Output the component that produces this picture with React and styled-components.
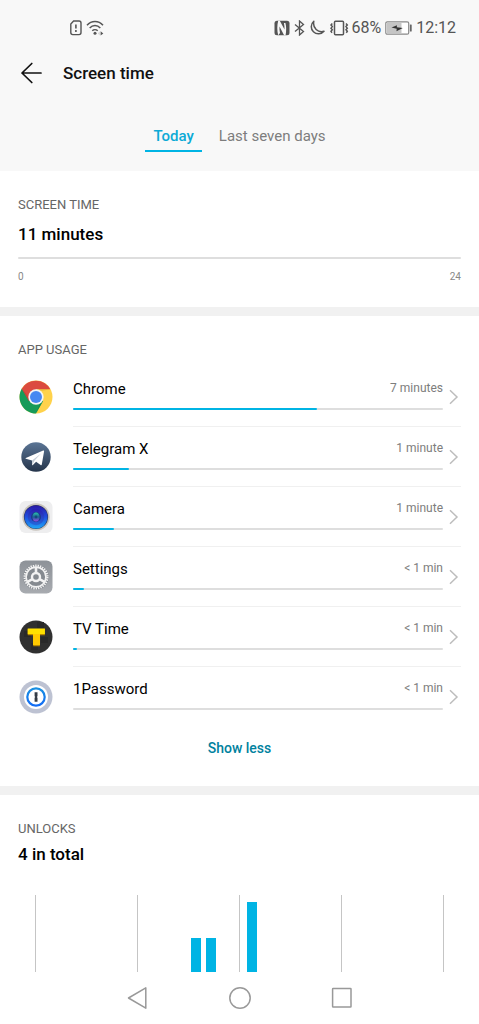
import React, { useState } from "react";
import styled, { createGlobalStyle } from "styled-components";

const blue = "#00b4e4";

const GlobalStyle = createGlobalStyle`
  * { box-sizing: border-box; }
  body {
    margin: 0;
    background: #fff;
    color: #000;
    font-family: Roboto, "Noto Sans", sans-serif;
  }
  svg { display: block; flex: none; }
  button { font: inherit; color: inherit; background: none; border: 0; padding: 0; cursor: pointer; }
  a { color: inherit; text-decoration: none; }
`;

const Screen = styled.div`
  display: flex;
  flex-direction: column;
  min-height: 100vh;
`;

const Header = styled.header`
  background: #f8f8f8;
  padding-bottom: 19px;
`;

const StatusBar = styled.div`
  display: flex;
  justify-content: space-between;
  align-items: center;
  height: 56px;
  padding: 0 23px 0 69px;
  font-size: 16px;
  line-height: 20px;
  color: #555;
`;

const StatusGroup = styled.div`
  display: flex;
  align-items: center;
  gap: ${(p) => p.$gap}px;
`;

const TitleBar = styled.div`
  display: flex;
  align-items: center;
  gap: 20px;
  height: 34px;
  padding: 0 20px;
`;

const Title = styled.h1`
  margin: 0;
  font-size: 17px;
  font-weight: 500;
  line-height: 24px;
  color: #111;
`;

const Tabs = styled.nav`
  display: flex;
  justify-content: center;
  gap: 9px;
  padding-top: 36px;
`;

const Tab = styled.button`
  && {
    padding: 0 8px 4px;
    border-bottom: 2px solid ${(p) => (p.$active ? blue : "transparent")};
    color: ${(p) => (p.$active ? "#0caad6" : "#7d7d7d")};
    font-size: 15px;
    font-weight: ${(p) => (p.$active ? 500 : 400)};
    line-height: 20px;
  }
`;

const Section = styled.section`
  padding: ${(p) => p.$pad};
  & + & { border-top: 9px solid #f1f1f1; }
`;

const SectionHeading = styled.div`
  padding: 0 18px;
`;

const Label = styled.h2`
  margin: 0;
  font-size: 13px;
  font-weight: 400;
  line-height: 16px;
  color: #666;
`;

const Total = styled.p`
  margin: ${(p) => p.$gap}px 0 0;
  font-size: 17px;
  font-weight: 500;
  line-height: 24px;
`;

const Track = styled.div`
  height: 2px;
  border-radius: 1px;
  background: #dedede;
`;

const DayTrack = styled(Track)`
  margin-top: 11px;
`;

const Fill = styled.div`
  height: 2px;
  border-radius: 1px;
  background: ${blue};
`;

const Scale = styled.div`
  display: flex;
  justify-content: space-between;
  margin-top: 12px;
  font-size: 10px;
  line-height: 12px;
  color: #888;
`;

const AppList = styled.ul`
  list-style: none;
  margin: 9px 0 0;
  padding: 0;
`;

const AppRow = styled.a`
  display: flex;
  height: 60px;
`;

const IconCell = styled.div`
  display: flex;
  align-items: center;
  justify-content: center;
  width: 36px;
  margin-right: 19px;
`;

const RowBody = styled.div`
  display: flex;
  flex: 1;
  align-items: center;
  border-bottom: 1px solid ${(p) => (p.$last ? "transparent" : "#f0f0f0")};
`;

const Usage = styled.div`
  flex: 1;
  padding-bottom: 5px;
`;

const UsageText = styled.div`
  display: flex;
  justify-content: space-between;
  margin-bottom: 9px;
  line-height: 20px;
`;

const AppName = styled.span`
  font-size: 15px;
`;

const Duration = styled.span`
  font-size: 12px;
  line-height: 18px;
  color: #7d7d7d;
`;

const ChevronCell = styled.div`
  padding: 0 2px 0 6px;
`;

const ShowLess = styled.button`
  && {
    display: block;
    margin: 11px auto 0;
    color: #00819e;
    font-size: 14px;
    font-weight: 500;
    line-height: 20px;
  }
`;

const Chart = styled.svg`
  width: 100%;
  height: auto;
  margin-top: 29px;
`;

const NavBar = styled.nav`
  display: flex;
  justify-content: center;
  height: 52px;
`;

const NavButton = styled.button`
  display: flex;
  align-items: center;
  justify-content: center;
  width: 102px;
`;

const SimIcon = () => (
  <svg width="14" height="16" viewBox="0 0 14 16" fill="none" stroke="#555" strokeWidth="1.4">
    <path d="M4.6 1H10a2 2 0 0 1 2 2v9.6a2 2 0 0 1-2 2H3.800a2 2 0 0 1-2-2V4z" />
    <path d="M6.900 4.600v4M6.900 10.100v1.800" strokeWidth="1.600" />
  </svg>
);

const WifiIcon = () => (
  <svg width="18" height="16" viewBox="0 0 18 16" fill="none" stroke="#555" strokeWidth="1.500">
    <path d="M1 5.200C5.500.3 12.500.3 17 5.200M3.700 8c3-3.200 7.600-3.200 10.600 0M6.300 10.800c1.500-1.500 3.900-1.500 5.400 0" />
    <circle cx="9" cy="13.300" r="1.500" fill="#555" stroke="none" />
    <path d="M14.600 11.300l2.700 2.200-2.700 2.100z" fill="#555" stroke="none" />
    <path d="M13.600 11.300l-1.500 2.200 1.500 1.900z" fill="#ccc" stroke="none" />
  </svg>
);

const NfcIcon = () => (
  <svg width="16" height="16" viewBox="0 0 16 16">
    <rect x="0.500" y="0.700" width="15" height="14.600" rx="2.500" fill="#555" />
    <path d="M4.200 15.300C3 11 3 5 4.200.7h1.600l4.700 8.800c.1-2.200-.1-4.300-.6-6.500h1.500c1 3.500 1 8 .2 12.300h-1.500L5.500 6.500c-.2 2.200 0 4.300.5 6.500z" fill="#f8f8f8" />
  </svg>
);

const BluetoothIcon = () => (
  <svg width="11" height="16" viewBox="0 0 11 16" fill="none" stroke="#555" strokeWidth="1.300">
    <path d="M1 4.500l8.500 7-4 3.500V1l4 3.500-8.500 7" />
  </svg>
);

const MoonIcon = () => (
  <svg width="16" height="16" viewBox="0 0 16 16" fill="none" stroke="#555" strokeWidth="1.500" strokeLinejoin="round">
    <path d="M4.800 1.200A7.200 7.200 0 1 0 15 11.300C9 12.900 3.400 8.200 4.800 1.200z" />
  </svg>
);

const VibrateIcon = () => (
  <svg width="20" height="16" viewBox="0 0 20 16" fill="none" stroke="#555">
    <rect x="5.500" y="1.300" width="9" height="13.400" rx="1" strokeWidth="1.500" />
    <path d="M3.300 3.500L2 5l1.300 1.600L2 8.200l1.300 1.600L2 11.400l1 1.400M17 3.500L18.300 5 17 6.600l1.300 1.600L17 9.800l1.300 1.600-1 1.400" strokeWidth="1.500" />
  </svg>
);

const BatteryIcon = () => (
  <svg width="27" height="14" viewBox="0 0 27 14">
    <rect x="0.800" y="0.800" width="22.900" height="12.400" rx="1.500" fill="#fff" stroke="#888" strokeWidth="1.200" />
    <rect x="2" y="2" width="14.500" height="10" fill="#c5c5c5" />
    <path d="M6.500 6.600L12 4.200l-.2 2 6 .8-6.300 3.200.2-2.500z" fill="#333" />
    <rect x="24.900" y="3.500" width="1.800" height="7" rx="0.500" fill="#666" />
  </svg>
);

const ChromeIcon = () => (
  <svg width="34" height="34" viewBox="0 0 34 34">
    <circle cx="17" cy="17" r="16.500" fill="#ffd24b" />
    <path d="M17 17L2.700 8.800A16.500 16.500 0 0 0 17 33.500L24.100 21z" fill="#169b59" />
    <path d="M17 17l-7.100 4L2.700 8.800A16.500 16.500 0 0 1 31.300 9.300H17z" fill="#db4b3f" />
    <path d="M9.900 21L2.700 8.800l4.500 5 3.500 7z" fill="#a53c2e" opacity=".45" />
    <path d="M17 9.300h14.300l-8 1.500z" fill="#d5a530" opacity=".6" />
    <path d="M24.100 21L17 33.500l3.500-9z" fill="#0b7a43" opacity=".5" />
    <circle cx="17" cy="17" r="7.700" fill="#f3f5f6" />
    <circle cx="17" cy="17" r="6" fill="#4788f2" />
  </svg>
);

const TelegramIcon = () => (
  <svg width="30" height="30" viewBox="0 0 30 30">
    <defs>
      <linearGradient id="telegram" x1="0" y1="0" x2="0" y2="1">
        <stop offset="0" stopColor="#5b7595" />
        <stop offset="1" stopColor="#25354b" />
      </linearGradient>
    </defs>
    <circle cx="15" cy="15" r="14.700" fill="url(#telegram)" />
    <path d="M4.800 15.900L22.200 8.500c.6-.2 1 .1.900.8l-2.300 13.200c-.1.700-.6.900-1.200.5l-4.500-3.200-3.200 3.300c-.4.400-.8.200-.8-.4L11 18.500l-6.100-1.800c-.6-.2-.6-.6-.1-.8z" fill="#fff" />
    <path d="M11 18.500L20 11.500l-6.600 7.300-2.100 4.200z" fill="#c6ced7" />
  </svg>
);

const CameraIcon = () => (
  <svg width="34" height="34" viewBox="0 0 34 34">
    <defs>
      <linearGradient id="lens" x1="0" y1="0" x2="0" y2="1">
        <stop offset="0" stopColor="#2a18a5" />
        <stop offset=".5" stopColor="#1f4fe0" />
        <stop offset="1" stopColor="#20a5f5" />
      </linearGradient>
      <linearGradient id="inner" x1="0" y1="0" x2="0" y2="1">
        <stop offset="0" stopColor="#2a1cae" />
        <stop offset="1" stopColor="#2269dc" />
      </linearGradient>
      <linearGradient id="glint" x1="0" y1="0" x2="0" y2="1">
        <stop offset="0" stopColor="#2cc5a8" />
        <stop offset=".5" stopColor="#1c5f98" />
        <stop offset="1" stopColor="#9a4be6" />
      </linearGradient>
    </defs>
    <rect x="0.500" y="1" width="33" height="32" rx="6" fill="#eeeeef" />
    <circle cx="17" cy="17" r="13.700" fill="#c9c4bd" />
    <circle cx="17" cy="17" r="12.100" fill="#2e3a5c" />
    <circle cx="17" cy="17" r="11.500" fill="url(#lens)" />
    <circle cx="17" cy="17" r="8.300" fill="url(#inner)" />
    <circle cx="17" cy="17" r="5" fill="#1b3a8c" />
    <ellipse cx="17" cy="17" rx="3.600" ry="4.600" fill="url(#glint)" />
    <circle cx="17" cy="17" r="1.400" fill="#14497c" />
  </svg>
);

const SettingsIcon = () => (
  <svg width="34" height="34" viewBox="0 0 34 34" fill="none">
    <defs>
      <linearGradient id="steel" x1="0" y1="0" x2="0" y2="1">
        <stop offset="0" stopColor="#8d9298" />
        <stop offset="1" stopColor="#a8abb0" />
      </linearGradient>
    </defs>
    <rect x="0.500" y="0.500" width="33" height="33" rx="6" fill="url(#steel)" />
    <circle cx="17" cy="17" r="12.800" fill="#858a90" />
    <circle cx="17" cy="17" r="11.400" stroke="#f2f2f2" strokeWidth="2.200" strokeDasharray="1.390 1" />
    <circle cx="17" cy="17" r="9.900" stroke="#f2f2f2" strokeWidth="1.600" />
    <path d="M17 17V7M17 17l-8.800 5.200M17 17l8.800 5.200" stroke="#f2f2f2" strokeWidth="2.600" />
    <circle cx="17" cy="17" r="4" fill="#858a90" stroke="#f2f2f2" strokeWidth="2.400" />
  </svg>
);

const TvTimeIcon = () => (
  <svg width="34" height="34" viewBox="0 0 34 34">
    <circle cx="17" cy="17" r="16.500" fill="#303030" />
    <path d="M5 11h7v6H5zM22 17h7v6h-7zM12 23h7v7h-7zM18 2h7v6h-7z" fill="#292929" />
    <path d="M8.700 9h17.200v6.300h-5v10.900h-6.700V15.300H8.700z" fill="#b88900" />
    <path d="M8.700 8.500h17.200V14h-5v11h-6.700V14H8.700z" fill="#ffe100" />
    <path d="M14.200 14h6.700v11h-6.700z" fill="#ffc900" />
  </svg>
);

const OnePasswordIcon = () => (
  <svg width="34" height="34" viewBox="0 0 34 34">
    <defs>
      <linearGradient id="ring" x1="0" y1="0" x2="0" y2="1">
        <stop offset="0" stopColor="#1a8fe0" />
        <stop offset="1" stopColor="#136cf5" />
      </linearGradient>
    </defs>
    <circle cx="17" cy="17" r="16.500" fill="#bdc2d2" />
    <circle cx="17" cy="17" r="12" fill="#fff" />
    <circle cx="17" cy="17" r="8.700" fill="#fff" stroke="url(#ring)" strokeWidth="2.200" />
    <path d="M15.600 12.300h2.900v4l-.7.700.7.700v4h-2.900v-4l.7-.7-.7-.7z" fill="#343b45" />
  </svg>
);

const Chevron = () => (
  <svg width="10" height="16" viewBox="0 0 10 16" fill="none" stroke="#bdbdbd" strokeWidth="1.500">
    <path d="M1 1.200L8 8l-7 6.800" />
  </svg>
);

const apps = [
  { name: "Chrome", time: "7 minutes", percent: 66, Icon: ChromeIcon },
  { name: "Telegram X", time: "1 minute", percent: 15, Icon: TelegramIcon },
  { name: "Camera", time: "1 minute", percent: 11, Icon: CameraIcon },
  { name: "Settings", time: "< 1 min", percent: 3, Icon: SettingsIcon },
  { name: "TV Time", time: "< 1 min", percent: 1, Icon: TvTimeIcon },
  { name: "1Password", time: "< 1 min", percent: 0, Icon: OnePasswordIcon },
];

const gridLines = [35, 137, 239, 341, 443];
const unlockBars = [
  { x: 191, height: 34 },
  { x: 206, height: 34 },
  { x: 247, height: 70 },
];

export default function App() {
  const [tab, setTab] = useState("Today");

  return (
    <Screen>
      <GlobalStyle />
      <Header>
        <StatusBar>
          <StatusGroup $gap={3}>
            <SimIcon />
            <WifiIcon />
          </StatusGroup>
          <StatusGroup $gap={4}>
            <NfcIcon />
            <BluetoothIcon />
            <MoonIcon />
            <StatusGroup $gap={2}>
              <VibrateIcon />
              <span>68%</span>
            </StatusGroup>
            <BatteryIcon />
            <span>12:12</span>
          </StatusGroup>
        </StatusBar>
        <TitleBar>
          <button aria-label="Back">
            <svg width="23" height="22" viewBox="0 0 23 22" fill="none" stroke="#111" strokeWidth="1.700" strokeLinecap="round" strokeLinejoin="round">
              <path d="M11.800 1.500L2 11l9.800 9.500M2 11h19" />
            </svg>
          </button>
          <Title>Screen time</Title>
        </TitleBar>
        <Tabs>
          {["Today", "Last seven days"].map((name) => (
            <Tab key={name} $active={tab === name} onClick={() => setTab(name)}>
              {name}
            </Tab>
          ))}
        </Tabs>
      </Header>

      <main>
        <Section $pad="26px 18px 24px">
          <Label>SCREEN TIME</Label>
          <Total $gap={9}>11 minutes</Total>
          <DayTrack />
          <Scale>
            <span>0</span>
            <span>24</span>
          </Scale>
        </Section>

        <Section $pad="26px 18px 28px">
          <Label>APP USAGE</Label>
          <AppList>
            {apps.map(({ name, time, percent, Icon }, i) => (
              <li key={name}>
                <AppRow href="#">
                  <IconCell>
                    <Icon />
                  </IconCell>
                  <RowBody $last={i === apps.length - 1}>
                    <Usage>
                      <UsageText>
                        <AppName>{name}</AppName>
                        <Duration>{time}</Duration>
                      </UsageText>
                      <Track>
                        <Fill style={{ width: `${percent}%` }} />
                      </Track>
                    </Usage>
                    <ChevronCell>
                      <Chevron />
                    </ChevronCell>
                  </RowBody>
                </AppRow>
              </li>
            ))}
          </AppList>
          <ShowLess>Show less</ShowLess>
        </Section>

        <Section $pad="26px 0 0">
          <SectionHeading>
            <Label>UNLOCKS</Label>
            <Total $gap={5}>4 in total</Total>
          </SectionHeading>
          <Chart viewBox="0 0 479 77" role="img" aria-label="Unlocks by hour" shapeRendering="crispEdges">
            {gridLines.map((x) => (
              <rect key={x} x={x} y="0" width="1" height="77" fill="#c5c5c5" />
            ))}
            {unlockBars.map((bar) => (
              <rect key={bar.x} x={bar.x} y={77 - bar.height} width="10" height={bar.height} fill={blue} />
            ))}
          </Chart>
        </Section>
      </main>

      <NavBar>
        <NavButton aria-label="Back">
          <svg width="22" height="24" viewBox="0 0 22 24" fill="none" stroke="#999" strokeWidth="1.500" strokeLinejoin="round">
            <path d="M18.800 1.800v20.400L1.500 12z" />
          </svg>
        </NavButton>
        <NavButton aria-label="Home">
          <svg width="24" height="24" viewBox="0 0 24 24" fill="none" stroke="#999" strokeWidth="1.500">
            <circle cx="12" cy="12" r="10.200" />
          </svg>
        </NavButton>
        <NavButton aria-label="Recent apps">
          <svg width="22" height="22" viewBox="0 0 22 22" fill="none" stroke="#999" strokeWidth="1.500">
            <rect x="1.600" y="1.600" width="18.400" height="18.400" rx="0.500" />
          </svg>
        </NavButton>
      </NavBar>
    </Screen>
  );
}
